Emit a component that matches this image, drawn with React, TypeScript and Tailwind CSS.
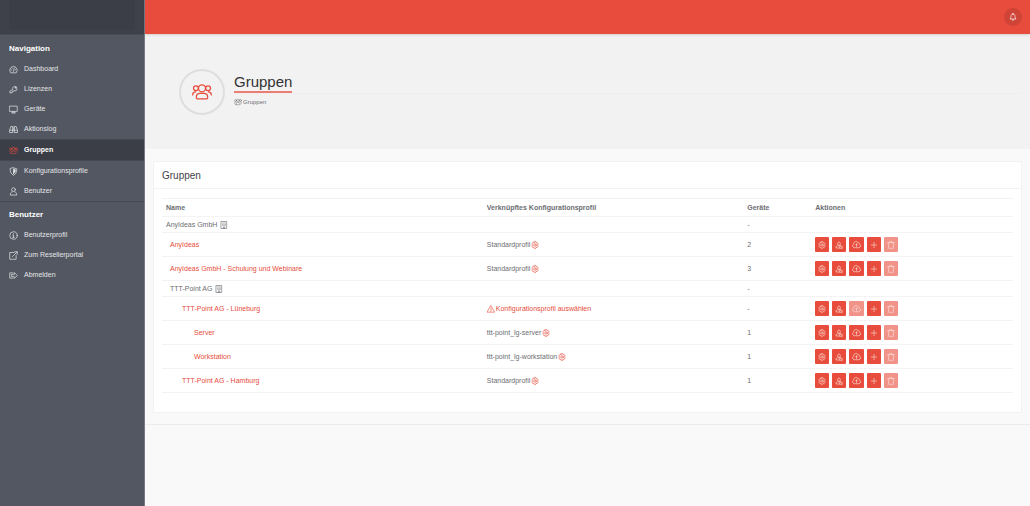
import type { ReactNode } from "react";

type IconName =
  | "gauge" | "key" | "monitor" | "binoculars" | "users" | "shield" | "user" | "info"
  | "external" | "logout" | "bell" | "building" | "gear" | "warning" | "userEdit"
  | "cloud" | "plus" | "trash";

const drawings: Record<IconName, ReactNode> = {
  gauge: (
    <>
      <path d="M4 20a10 10 0 1 1 16 0Z" />
      <path d="M12 17 14 8M6 13h1M8 8l.5.5M17 13h1" />
    </>
  ),
  key: (
    <>
      <path d="M9.5 11.500a6 6 0 1 1 4 4L11 16v2H8v3H2.500v-4Z" />
      <circle cx="16.500" cy="7.500" r="1" />
    </>
  ),
  monitor: (
    <path d="M2 3h20v14H2ZM10 17v4M14 17v4M7 21h10" />
  ),
  binoculars: (
    <>
      <path d="M6 4h4v16H1.500v-5ZM18 4h-4v16h8.500v-5ZM10 8h4M10 13h4" />
      <path d="M3 14h7M14 14h7" />
    </>
  ),
  users: (
    <>
      <circle cx="12" cy="7.500" r="4.200" />
      <circle cx="4.700" cy="7.500" r="2.900" />
      <circle cx="19.300" cy="7.500" r="2.900" />
      <path d="M5.200 19v-1a4.500 4.500 0 0 1 4.500-4.300h4.600a4.500 4.500 0 0 1 4.500 4.300v1a1.200 1.200 0 0 1-1.200 1.200H6.400A1.200 1.200 0 0 1 5.200 19Z" />
      <path d="M.8 15.500c0-2.500 1-3.700 3.700-3.700M23.200 15.500c0-2.500-1-3.700-3.700-3.700" />
    </>
  ),
  shield: (
    <>
      <path d="M12 2 21 5c0 9-3 14-9 17C6 19 3 14 3 5Z" />
      <path d="M12 6v12c3-2 5-5 5-10Z" fill="currentColor" />
    </>
  ),
  user: (
    <>
      <circle cx="12" cy="7" r="5" />
      <path d="M8.500 13C5 14 3.500 16 3.500 21.500h17C20.500 16 19 14 15.500 13" />
    </>
  ),
  info: (
    <>
      <circle cx="12" cy="12" r="10" />
      <path d="M10 11h2v6M10 17h4M12 7v1" />
    </>
  ),
  external: (
    <path d="M13 4H2v18h17V12M9 15 22 2M15 2h7v7" />
  ),
  logout: (
    <path d="M10 5H2v14h8M8 9h6V4l8 8-8 8v-5H8Z" />
  ),
  bell: (
    <>
      <path d="M12 3c-4 0-6 3-6 7 0 4-1 6-3 8h18c-2-2-3-4-3-8 0-4-2-7-6-7ZM12 1v2" />
      <path d="M9.500 20a2.500 2.500 0 0 0 5 0" />
    </>
  ),
  building: (
    <path d="M4 1.500h16v21H4ZM8 6h2M14 6h2M8 10h2M14 10h2M8 14h2M14 14h2M10 22v-4h4v4" />
  ),
  gear: (
    <>
      <path d="M9.500 2h5l1 3 3-.5 3 4.500-2 3 2 3-3 4.500-3-.5-1 3h-5l-1-3-3 .5-3-4.500 2-3-2-3 3-4.500 3 .5Z" />
      <circle cx="12" cy="12" r="3.800" />
    </>
  ),
  warning: (
    <path d="M12 2.500 23 21.500H1ZM12 9v6M12 17.500v1.500" />
  ),
  userEdit: (
    <>
      <path d="M9 12c-2-2-2-9 3-9s5 7 3 9M9 12c-4 1-6 4-6 9h10M15 12c2 .5 3 1.500 4 3" />
      <path d="M15 17h7v5h-7ZM10 13l2 3 2-3" />
    </>
  ),
  cloud: (
    <>
      <path d="M6 20.500a5 5 0 0 1-1.500-9.500C4.500 3.500 13.500 1.500 16 7.500c2.500-.5 4 1.300 3.500 3.500a4.900 4.900 0 0 1-1 9.500Z" />
      <path d="M12 17v-6M9.500 13l2.500-2.500 2.500 2.500" />
    </>
  ),
  plus: (
    <path d="M12 4v16M4 12h16" />
  ),
  trash: (
    <path d="M2 5h20M8 5V2h8v3M4 5l1 17h14l1-17" />
  ),
};

function Icon({ name, className }: { name: IconName; className: string }) {
  return (
    <svg
      viewBox="0 0 24 24"
      className={`inline-block shrink-0 ${className}`}
      fill="none"
      stroke="currentColor"
      strokeWidth={name === "users" ? 1.500 : 1.900}
      strokeLinecap="round"
      strokeLinejoin="round"
      aria-hidden="true"
    >
      {drawings[name]}
    </svg>
  );
}

type NavEntry = { label: string; icon: IconName; active?: boolean };

const mainNav: NavEntry[] = [
  { label: "Dashboard", icon: "gauge" },
  { label: "Lizenzen", icon: "key" },
  { label: "Geräte", icon: "monitor" },
  { label: "Aktionslog", icon: "binoculars" },
  { label: "Gruppen", icon: "users", active: true },
  { label: "Konfigurationsprofile", icon: "shield" },
  { label: "Benutzer", icon: "user" },
];

const userNav: NavEntry[] = [
  { label: "Benutzerprofil", icon: "info" },
  { label: "Zum Resellerportal", icon: "external" },
  { label: "Abmelden", icon: "logout" },
];

function NavGroup({ title, items }: { title: string; items: NavEntry[] }) {
  return (
    <section>
      <h2 className="px-[9px] text-[8px] leading-5 font-bold text-white">{title}</h2>
      <ul>
        {items.map((item) => (
          <li key={item.label}>
            <a
              href="#"
              aria-current={item.active ? "page" : undefined}
              className={
                item.active
                  ? "flex items-center gap-[6px] border-y border-[#44474f] bg-[#3b3e46] px-[9px] leading-5 font-bold text-white"
                  : "flex items-center gap-[6px] px-[9px] leading-5 text-[#e4e5e8]"
              }
            >
              <Icon name={item.icon} className={item.active ? "size-[9px] text-[#e74c3c]" : "size-[9px]"} />
              {item.label}
            </a>
          </li>
        ))}
      </ul>
    </section>
  );
}

type Row = {
  name: string;
  indent: string;
  tenant?: boolean;
  profile?: string;
  missing?: boolean;
  devices: string;
};

const rows: Row[] = [
  { name: "AnyIdeas GmbH", indent: "pl-1", tenant: true, devices: "-" },
  { name: "AnyIdeas", indent: "pl-2", profile: "Standardprofil", devices: "2" },
  { name: "AnyIdeas GmbH - Schulung und Webinare", indent: "pl-2", profile: "Standardprofil", devices: "3" },
  { name: "TTT-Point AG", indent: "pl-2", tenant: true, devices: "-" },
  { name: "TTT-Point AG - Lüneburg", indent: "pl-5", profile: "Konfigurationsprofil auswählen", missing: true, devices: "-" },
  { name: "Server", indent: "pl-8", profile: "ttt-point_lg-server", devices: "1" },
  { name: "Workstation", indent: "pl-8", profile: "ttt-point_lg-workstation", devices: "1" },
  { name: "TTT-Point AG - Hamburg", indent: "pl-5", profile: "Standardprofil", devices: "1" },
];

function ActionButton({ icon, label, disabled }: { icon: IconName; label: string; disabled?: boolean }) {
  return (
    <button
      type="button"
      aria-label={label}
      disabled={disabled}
      className="flex h-[15px] items-center justify-center rounded-[1px] bg-[#e74c3c] px-[3px] text-[#fbdcd8] disabled:bg-[#f19389]"
    >
      <Icon name={icon} className={icon === "cloud" ? "size-[9px]" : "size-2"} />
    </button>
  );
}

function GroupRow({ row }: { row: Row }) {
  return (
    <tr className={row.tenant ? "h-4 border-b border-[#f3f3f3]" : "h-6 border-b border-[#f3f3f3]"}>
      <td className={row.indent}>
        {row.tenant ? (
          <span className="flex items-center gap-[3px]">
            {row.name}
            <Icon name="building" className="size-2" />
          </span>
        ) : (
          <a href="#" className="text-[#e74c3c]">{row.name}</a>
        )}
      </td>
      <td className="pl-1">
        {row.missing && (
          <a href="#" className="flex items-center gap-px text-[#e74c3c]">
            <Icon name="warning" className="size-2" />
            {row.profile}
          </a>
        )}
        {row.profile && !row.missing && (
          <span className="flex items-center gap-px">
            {row.profile}
            <a href="#" aria-label="Profil bearbeiten" className="flex text-[#e74c3c]">
              <Icon name="gear" className="size-2" />
            </a>
          </span>
        )}
      </td>
      <td className="pl-1">{row.devices}</td>
      <td className="pl-1">
        {!row.tenant && (
          <div className="flex gap-[3px]">
            <ActionButton icon="gear" label="Einstellungen" />
            <ActionButton icon="userEdit" label="Benutzer zuweisen" />
            <ActionButton icon="cloud" label="Hochladen" disabled={row.missing} />
            <ActionButton icon="plus" label="Hinzufügen" />
            <ActionButton icon="trash" label="Löschen" disabled />
          </div>
        )}
      </td>
    </tr>
  );
}

export default function App() {
  return (
    <div className="flex min-h-screen bg-[#f9f9f9] font-['Liberation_Sans',sans-serif] text-[7px] leading-2 text-[#6c6e72]">
      <aside className="w-[145px] shrink-0 border-r border-[#777a82] bg-[#535761]">
        <div className="h-[35px] border-b border-[#484b54] bg-[#3e414a] px-[9px] pb-1">
          <div className="h-full bg-[#3b3e46]" />
        </div>
        <nav className="pt-1">
          <NavGroup title="Navigation" items={mainNav} />
          <div className="mb-[3px] border-t border-[#484b54]" />
          <NavGroup title="Benutzer" items={userNav} />
        </nav>
      </aside>

      <div className="min-w-0 flex-1">
        <header className="relative flex h-[34px] items-center justify-end bg-[#e74c3c] pr-2 shadow">
          <button
            type="button"
            aria-label="Benachrichtigungen"
            className="flex size-[18px] items-center justify-center rounded-full bg-[#cf4436] text-white"
          >
            <Icon name="bell" className="size-2" />
          </button>
        </header>

        <div className="flex h-[115px] items-center gap-[9px] bg-[#f2f2f2] pr-2 pl-[34px]">
          <div className="flex size-[46px] shrink-0 items-center justify-center rounded-full border-2 border-[#dedede] text-[#e74c3c]">
            <Icon name="users" className="size-5" />
          </div>
          <div className="min-w-0 flex-1 pb-1">
            <h1 className="flex border-b border-[#eeeeee] text-[15px] leading-[18px] text-[#333333]">
              <span className="border-b-2 border-[#ec7f75]">Gruppen</span>
            </h1>
            <p className="mt-1 flex items-center gap-px text-[6px] leading-2">
              <Icon name="users" className="size-2" />
              Gruppen
            </p>
          </div>
        </div>

        <main>
          <div className="border-b border-[#ececec] px-2 pt-3 pb-[11px]">
            <section className="border border-[#f2f2f2] bg-white">
              <h2 className="border-b border-[#f3f3f3] px-2 pt-[2px] text-[10px] leading-6 text-[#3f4145]">Gruppen</h2>
              <div className="px-2 pt-[9px] pb-[19px]">
                <table className="w-full table-fixed border-collapse text-left">
                  <thead>
                    <tr className="h-[18px] border-y border-[#f3f3f3]">
                      <th className="w-[37.700%] pl-1">Name</th>
                      <th className="w-[30.600%] pl-1">Verknüpftes Konfigurationsprofil</th>
                      <th className="w-[8%] pl-1">Geräte</th>
                      <th className="pl-1">Aktionen</th>
                    </tr>
                  </thead>
                  <tbody>
                    {rows.map((row) => (
                      <GroupRow key={row.name} row={row} />
                    ))}
                  </tbody>
                </table>
              </div>
            </section>
          </div>
        </main>
      </div>
    </div>
  );
}
